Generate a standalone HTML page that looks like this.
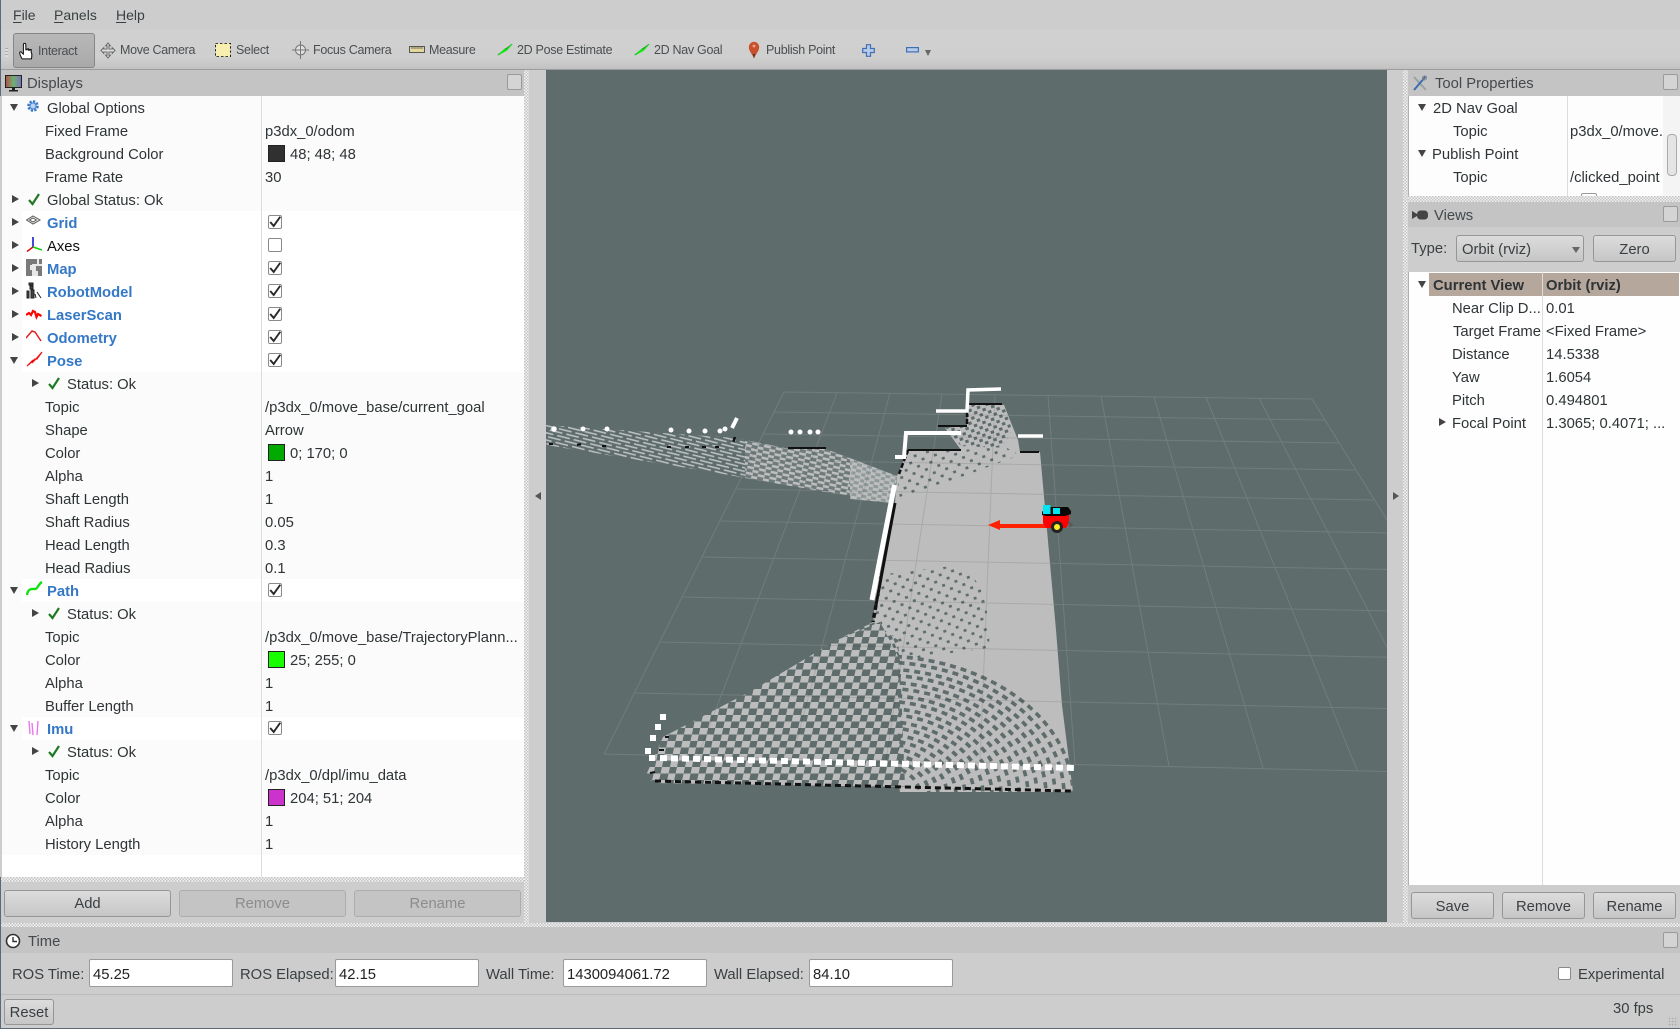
<!DOCTYPE html>
<html><head><meta charset="utf-8"><style>
html,body{margin:0;padding:0;width:1680px;height:1029px;overflow:hidden;background:#cdcdcd}
body{position:relative;font:14.8px/27px "Liberation Sans","DejaVu Sans",sans-serif;color:#2e3436}
div,span,svg{position:absolute;white-space:nowrap}
.r{left:0;width:524px;height:23px;background:#fbfbfb}
.w{position:absolute;left:22px;right:0;top:0;bottom:0;background:#fff}
.b{color:#3478c6;font-weight:bold}
.l0{left:47px}.l1{left:45px}.l2{left:67px}.v{left:265px;color:#2e3436}.vc{left:290px}
.a{width:0;height:0;border-left:7px solid #444;border-top:4.5px solid transparent;border-bottom:4.5px solid transparent;left:12px;top:7px}
.d{width:0;height:0;border-top:7px solid #444;border-left:4.5px solid transparent;border-right:4.5px solid transparent;left:10px;top:8px}
.n{left:32px}
.sw{left:268px;top:3px;width:15px;height:15px;border:1px solid #222}
.ck{left:268px;top:4px;width:12px;height:12px;border:1px solid #8a8a8a;border-radius:2px;background:#fff}
.ck svg{left:-1px;top:-3px}
.ic{left:26px;top:3px}
.chk{left:46px;top:3px}
.tb{font-size:12.5px;line-height:16px;color:#4a4f52;letter-spacing:-.3px;top:42px}
.m{font-size:14px;line-height:18px;top:6px;color:#3a3f42}
.m u{text-underline-offset:2px}
.tt{background:#c4c4c4;height:26px;color:#44494c;line-height:26px}
.fl{width:13px;height:14px;background:#d4d4d4;border:1px solid #9a9a9a;border-radius:2px}
.bt{background:linear-gradient(#dcdcdc,#c6c6c6);border:1px solid #969696;border-radius:3px;text-align:center;line-height:27px;box-sizing:border-box;color:#3a3f42}
.rb{line-height:29px}
.ds{background:#c4c4c4;border-color:#adadad;color:#8c8c8c}
.dot{background:repeating-conic-gradient(#f2f2f2 0 25%,#c4c4c4 0 50%) 0 0/3px 3px}
.inp{height:28px;background:#fff;border:1px solid #9a9a9a;border-radius:2px;box-sizing:border-box;line-height:30px;padding-left:3px;top:959px;width:144px;color:#222}
.lb{top:962px;color:#3a3f42}
</style></head><body>

<svg width="0" height="0" style="left:0;top:0"><defs>
<symbol id="okk" viewBox="0 0 16 16"><path d="M3 9 L6.5 13 L13 3" fill="none" stroke="#1f7a23" stroke-width="2.2"/></symbol>
<symbol id="tick" viewBox="0 0 16 18"><path d="M2.5 9 L6.5 13.5 L14 3" fill="none" stroke="#2a2a2a" stroke-width="2.2"/></symbol>
</defs></svg>

<!-- window edges -->
<div style="left:0;top:0;width:1px;height:1029px;background:#5a6a78"></div>
<div style="left:0;top:1028px;width:1680px;height:1px;background:#5a6a78"></div>

<!-- menu -->
<div style="left:1px;top:0;width:1679px;height:30px;background:#cdcdcd"></div>
<div class="m" style="left:13px"><u>F</u>ile</div>
<div class="m" style="left:54px"><u>P</u>anels</div>
<div class="m" style="left:116px"><u>H</u>elp</div>

<!-- toolbar -->
<div style="left:1px;top:30px;width:1679px;height:40px;background:linear-gradient(#d0d0d0 0,#cfcfcf 70%,#c2c2c2 97%,#9c9c9c 97%)"></div>
<div style="left:5px;top:48px;width:3px;height:9px;background:repeating-linear-gradient(#aaa 0 1px,#ddd 1px 3px)"></div>
<div style="left:13px;top:33px;width:80px;height:33px;background:linear-gradient(#b8b8b8,#a9a9a9);border:1px solid #868686;border-radius:3px"></div>
<svg style="left:17px;top:42px" width="18" height="19" viewBox="0 0 18 22"><path d="M6 11 V3 a1.4 1.4 0 0 1 2.8 0 V9 h1.6 V8 h1.6 v1.5 h1.5 v-.8 h1.5 V12 c1 1 .8 5 .3 7.5 H4.5 C3 17 1.5 13.5 1.8 12 c.6-1.2 2.3-.7 2.8 1 L6 14 Z" fill="#fff" stroke="#111" stroke-width="1.2"/></svg>
<div class="tb" style="left:38px;top:43px">Interact</div>

<svg style="left:100px;top:42px" width="16" height="17" viewBox="0 0 16 18" fill="none" stroke="#666"><path d="M8 1 L10.5 4 H9 V7.5 H12.5 V6 L15.5 9 L12.5 12 V10.5 H9 V14 H10.5 L8 17 L5.5 14 H7 V10.5 H3.5 V12 L.5 9 L3.5 6 V7.5 H7 V4 H5.5 Z" fill="#ddd"/></svg>
<div class="tb" style="left:120px">Move Camera</div>
<svg style="left:215px;top:43px" width="16" height="14" viewBox="0 0 16 15" preserveAspectRatio="none"><rect x=".5" y=".5" width="15" height="14" fill="#f6efb0" stroke="#222" stroke-dasharray="2.5 2"/></svg>
<div class="tb" style="left:236px">Select</div>
<svg style="left:292px;top:41px" width="17" height="18" viewBox="0 0 17 18" fill="none" stroke="#777"><path d="M8.5 0 V18 M0 9 H17"/><circle cx="8.5" cy="9" r="5" fill="#e2e2e2"/><path d="M8.5 3 V15 M3 9 H14"/></svg>
<div class="tb" style="left:313px">Focus Camera</div>
<svg style="left:409px;top:46px" width="16" height="8" viewBox="0 0 16 8"><rect x=".5" y=".5" width="15" height="6" fill="#e3d89a" stroke="#555"/><path d="M3 1v2M5 1v2M7 1v2M9 1v2M11 1v2M13 1v2" stroke="#555" stroke-width=".8"/></svg>
<div class="tb" style="left:429px">Measure</div>
<svg style="left:497px;top:43px" width="16" height="13" viewBox="0 0 17 17" preserveAspectRatio="none"><path d="M1 15.5 L16 1.5" stroke="#111" stroke-width="1"/><path d="M1 16 L9 7 L7 10.5 L11 9 Z M9 9 L16 1.5 L11.5 8 Z" fill="#12e812" stroke="#12e812" stroke-width="1"/></svg>
<div class="tb" style="left:517px">2D Pose Estimate</div>
<svg style="left:634px;top:43px" width="16" height="13" viewBox="0 0 17 17" preserveAspectRatio="none"><path d="M1 15.5 L16 1.5" stroke="#111" stroke-width="1"/><path d="M1 16 L9 7 L7 10.5 L11 9 Z M9 9 L16 1.5 L11.5 8 Z" fill="#12e812" stroke="#12e812" stroke-width="1"/></svg>
<div class="tb" style="left:654px">2D Nav Goal</div>
<svg style="left:748px;top:41px" width="12" height="18" viewBox="0 0 12 18"><path d="M6 17.5 C4.5 13 .8 10.5 .8 6 a5.2 5.2 0 0 1 10.4 0 C11.2 10.5 7.5 13 6 17.5 Z" fill="#c8502c"/><circle cx="6" cy="5" r="1.4" fill="#eba68a"/><path d="M4.7 13 H7.3 L6 17.5 Z" fill="#553322"/></svg>
<div class="tb" style="left:766px">Publish Point</div>
<svg style="left:862px;top:44px" width="13" height="13" viewBox="0 0 13 13"><path d="M4.5 .7 H8.5 V4.5 H12.3 V8.5 H8.5 V12.3 H4.5 V8.5 H.7 V4.5 H4.5 Z" fill="#b8cbe8" stroke="#3f6fb5" stroke-width="1.2"/></svg>
<svg style="left:906px;top:47px" width="13" height="6" viewBox="0 0 13 6"><rect x=".6" y=".6" width="11.8" height="4.3" fill="#b8cbe8" stroke="#3f6fb5" stroke-width="1.2"/></svg>
<div style="left:925px;top:50px;width:0;height:0;border-top:6px solid #666;border-left:3.5px solid transparent;border-right:3.5px solid transparent"></div>

<!-- Displays panel -->
<div class="tt" style="left:1px;top:70px;width:523px"></div>
<svg style="left:5px;top:75px" width="17" height="17" viewBox="0 0 17 17"><rect x=".5" y=".5" width="16" height="12" fill="url(#rb)" stroke="#222"/><defs><linearGradient id="rb"><stop offset="0" stop-color="#b0504a"/><stop offset=".5" stop-color="#70b070"/><stop offset="1" stop-color="#7a70c0"/></linearGradient></defs><path d="M7 13 h3 v2 h3 v1.5 H4 V15 h3 Z" fill="#222"/></svg>
<div style="left:27px;top:70px;line-height:28px;color:#44494c">Displays</div>
<div class="fl" style="left:507px;top:74px"></div>

<div style="left:2px;top:96px;width:522px;height:781px;background:#fbfbfb;overflow:hidden"></div>

<div style="left:0;top:0;width:524px;height:877px;overflow:hidden">
<div class="r" style="top:96px"><span class="d"></span><svg class="ic" width="16" height="16" viewBox="0 0 16 16"><circle cx="7" cy="7" r="4.5" fill="#cfe0f5" stroke="#3a78c8" stroke-width="2.6" stroke-dasharray="2.2 1.3"/><circle cx="7" cy="7" r="3" fill="#bcd3ef" stroke="#4a86d0"/></svg><span class="l0">Global Options</span></div>
<div class="r" style="top:119px"><span class="l1">Fixed Frame</span><span class="v">p3dx_0/odom</span></div>
<div class="r" style="top:142px"><span class="l1">Background Color</span><span class="sw" style="background:#303030"></span><span class="vc">48; 48; 48</span></div>
<div class="r" style="top:165px"><span class="l1">Frame Rate</span><span class="v">30</span></div>
<div class="r" style="top:188px"><span class="a"></span><svg class="ic" width="16" height="16"><use href="#okk"/></svg><span class="l0">Global Status: Ok</span></div>

<div class="r" style="top:211px"><i class="w"></i><span class="a"></span><svg class="ic" width="16" height="16" viewBox="0 0 16 16" fill="none" stroke="#555"><path d="M7 2 L14 6 L7 10 L0.5 6 Z M7 4 L10.5 6 L7 8 L3.5 6 Z"/></svg><span class="l0 b">Grid</span><span class="ck"><svg width="14" height="18"><use href="#tick"/></svg></span></div>
<div class="r" style="top:234px"><i class="w"></i><span class="a"></span><svg class="ic" style="top:2px" width="17" height="17" viewBox="0 0 17 17"><path d="M7 11 V1" stroke="#1a1ad0" stroke-width="1.6"/><path d="M7 11 L1 15.5" stroke="#e01010" stroke-width="1.6"/><path d="M7 11 L16 14" stroke="#10d010" stroke-width="1.6"/></svg><span class="l0" style="color:#111">Axes</span><span class="ck"></span></div>
<div class="r" style="top:257px"><i class="w"></i><span class="a"></span><svg class="ic" style="top:2px" width="16" height="17" viewBox="0 0 16 17"><rect width="16" height="17" fill="#e8e8e8"/><path d="M0 0h6v6H0zM6 0h5v5H6zM13 0h3v5h-3zM0 6h4v5H0zM0 11h6v6H0zM10 7h6v5h-6zM12 12h4v5h-4z" fill="#7a7a7a"/></svg><span class="l0 b">Map</span><span class="ck"><svg width="14" height="18"><use href="#tick"/></svg></span></div>
<div class="r" style="top:280px"><i class="w"></i><span class="a"></span><svg class="ic" style="top:2px" width="16" height="17" viewBox="0 0 16 17"><path d="M3 1h4v2H3zM4 4h3v3H4zM1 9h2v7H1zM5 8h3v8H5zM9 12l1 4M11 10l4 6" stroke="#222" stroke-width="1" fill="#444"/></svg><span class="l0 b">RobotModel</span><span class="ck"><svg width="14" height="18"><use href="#tick"/></svg></span></div>
<div class="r" style="top:303px"><i class="w"></i><span class="a"></span><svg class="ic" width="16" height="16" viewBox="0 0 16 16"><path d="M0 9 L3 7 L5 9 L7 5 L9 6 L10.5 11 L12 8 L15.5 10" fill="none" stroke="#f00" stroke-width="2.2"/></svg><span class="l0 b">LaserScan</span><span class="ck"><svg width="14" height="18"><use href="#tick"/></svg></span></div>
<div class="r" style="top:326px"><i class="w"></i><span class="a"></span><svg class="ic" style="top:2px" width="16" height="17" viewBox="0 0 16 17"><path d="M0 10 L6 3 L9 4 L15 13" fill="none" stroke="#e02020" stroke-width="1.5"/></svg><span class="l0 b">Odometry</span><span class="ck"><svg width="14" height="18"><use href="#tick"/></svg></span></div>
<div class="r" style="top:349px"><i class="w"></i><span class="d"></span><svg class="ic" style="top:1px" width="17" height="18" viewBox="0 0 17 18"><path d="M1 16 L7 10 L6 13 L10 9 L16 2 L11 9 L9 9 Z" fill="#f01010" stroke="#f01010" stroke-width="1.2"/></svg><span class="l0 b">Pose</span><span class="ck"><svg width="14" height="18"><use href="#tick"/></svg></span></div>
<div class="r" style="top:372px"><span class="a n"></span><svg class="chk" width="16" height="16"><use href="#okk"/></svg><span class="l2">Status: Ok</span></div>
<div class="r" style="top:395px"><span class="l1">Topic</span><span class="v">/p3dx_0/move_base/current_goal</span></div>
<div class="r" style="top:418px"><span class="l1">Shape</span><span class="v">Arrow</span></div>
<div class="r" style="top:441px"><span class="l1">Color</span><span class="sw" style="background:#00aa00"></span><span class="vc">0; 170; 0</span></div>
<div class="r" style="top:464px"><span class="l1">Alpha</span><span class="v">1</span></div>
<div class="r" style="top:487px"><span class="l1">Shaft Length</span><span class="v">1</span></div>
<div class="r" style="top:510px"><span class="l1">Shaft Radius</span><span class="v">0.05</span></div>
<div class="r" style="top:533px"><span class="l1">Head Length</span><span class="v">0.3</span></div>
<div class="r" style="top:556px"><span class="l1">Head Radius</span><span class="v">0.1</span></div>
<div class="r" style="top:579px"><i class="w"></i><span class="d"></span><svg class="ic" style="top:2px" width="17" height="16" viewBox="0 0 17 16"><path d="M1 14 C2 7 6 8 9 8 C12 8 12 3 16 1" fill="none" stroke="#10e010" stroke-width="2.4"/></svg><span class="l0 b">Path</span><span class="ck"><svg width="14" height="18"><use href="#tick"/></svg></span></div>
<div class="r" style="top:602px"><span class="a n"></span><svg class="chk" width="16" height="16"><use href="#okk"/></svg><span class="l2">Status: Ok</span></div>
<div class="r" style="top:625px"><span class="l1">Topic</span><span class="v">/p3dx_0/move_base/TrajectoryPlann...</span></div>
<div class="r" style="top:648px"><span class="l1">Color</span><span class="sw" style="background:#19ff00"></span><span class="vc">25; 255; 0</span></div>
<div class="r" style="top:671px"><span class="l1">Alpha</span><span class="v">1</span></div>
<div class="r" style="top:694px"><span class="l1">Buffer Length</span><span class="v">1</span></div>
<div class="r" style="top:717px"><i class="w"></i><span class="d"></span><svg class="ic" style="left:28px;top:3px" width="12" height="16" viewBox="0 0 12 16" fill="none" stroke="#e878e8" stroke-width="1.4"><path d="M1 1 L2 14 M4 3 L5 15 M10 1 L9 15"/></svg><span class="l0 b">Imu</span><span class="ck"><svg width="14" height="18"><use href="#tick"/></svg></span></div>
<div class="r" style="top:740px"><span class="a n"></span><svg class="chk" width="16" height="16"><use href="#okk"/></svg><span class="l2">Status: Ok</span></div>
<div class="r" style="top:763px"><span class="l1">Topic</span><span class="v">/p3dx_0/dpl/imu_data</span></div>
<div class="r" style="top:786px"><span class="l1">Color</span><span class="sw" style="background:#cc33cc"></span><span class="vc">204; 51; 204</span></div>
<div class="r" style="top:809px"><span class="l1">Alpha</span><span class="v">1</span></div>
<div class="r" style="top:832px"><span class="l1">History Length</span><span class="v">1</span></div>
<div class="r" style="top:855px;height:22px;background:#fff"></div>
<div style="left:261px;top:96px;width:1px;height:781px;background:#dcdcdc"></div>
<div style="left:0;top:96px;width:2px;height:781px;background:#cdcdcd"></div>
</div>

<div class="dot" style="left:1px;top:877px;width:528px;height:5px"></div>
<div class="dot" style="left:524px;top:70px;width:5px;height:853px"></div>
<div class="bt" style="left:4px;top:890px;width:167px;height:27px">Add</div>
<div class="bt ds" style="left:179px;top:890px;width:167px;height:27px">Remove</div>
<div class="bt ds" style="left:354px;top:890px;width:167px;height:27px">Rename</div>

<!-- collapse arrows -->
<div style="left:535px;top:492px;width:0;height:0;border-right:6px solid #555;border-top:4px solid transparent;border-bottom:4px solid transparent"></div>
<div style="left:1393px;top:492px;width:0;height:0;border-left:6px solid #555;border-top:4px solid transparent;border-bottom:4px solid transparent"></div>

<!-- 3D viewport -->
<svg style="left:546px;top:70px" width="841" height="852" viewBox="546 70 841 852">
<defs>
<pattern id="p1" patternUnits="userSpaceOnUse" width="15" height="13" patternTransform="skewX(-12)"><rect width="15" height="13" fill="#5e6c6c"/><rect width="8" height="6.5" fill="#bdbdbd"/><rect x="8" y="6.5" width="8" height="6.5" fill="#bdbdbd"/></pattern>
<pattern id="p2" patternUnits="userSpaceOnUse" width="11" height="9" patternTransform="rotate(-22)"><rect width="11" height="9" fill="#5e6c6c"/><rect width="6" height="4.5" fill="#bdbdbd"/><rect x="5.5" y="4.5" width="6" height="4.5" fill="#bdbdbd"/></pattern>
<pattern id="p3" patternUnits="userSpaceOnUse" width="9" height="8" patternTransform="rotate(-20)"><rect width="9" height="8" fill="#bdbdbd"/><rect width="3.4" height="3" fill="#5e6c6c"/><rect x="4.5" y="4" width="3.4" height="3" fill="#5e6c6c"/></pattern>
<pattern id="p6" patternUnits="userSpaceOnUse" width="13" height="11" patternTransform="rotate(-18)"><rect width="13" height="11" fill="#bdbdbd"/><rect width="3" height="2.6" fill="#5e6c6c"/><rect x="6.5" y="5.5" width="3" height="2.6" fill="#5e6c6c"/></pattern>
<pattern id="p4" patternUnits="userSpaceOnUse" width="17" height="7" patternTransform="rotate(14)"><rect width="13" height="1.6" fill="#b9bebe"/><rect x="8.5" y="3.5" width="13" height="1.6" fill="#b9bebe"/><rect x="-8.5" y="3.5" width="13" height="1.6" fill="#b9bebe"/></pattern>
<pattern id="p5" patternUnits="userSpaceOnUse" width="10" height="6" patternTransform="rotate(11)"><rect width="10" height="6" fill="#8f9a9a"/><rect width="6" height="3" fill="#bdbdbd"/><rect x="5" y="3" width="6" height="3" fill="#bdbdbd"/></pattern>
<pattern id="p7" patternUnits="userSpaceOnUse" width="12" height="6" patternTransform="rotate(12)"><rect width="12" height="6" fill="#6e7b7b"/><rect width="7" height="2.6" fill="#bdbdbd"/><rect x="6" y="3" width="7" height="2.6" fill="#bdbdbd"/></pattern>
<clipPath id="c1"><polygon points="898,650 975,645 1056,645 1062,705 1073,792 898,792"/></clipPath>
<path id="gr" d="M784 392L1312 399M774 412L1325 420M763 434L1339 443M750 460L1356 470M736 489L1374 500M720 521L1395 533M702 557L1418 570M682 597L1444 612M660 642L1473 659M634 693L1506 711M604 754L1545 775M784 392L604 754M837 393L698 756M890 393L792 758M942 394L886 760M995 395L980 762M1048 396L1075 764M1101 396L1169 766M1154 397L1263 768M1206 397L1357 770M1259 398L1451 772M1312 399L1545 775" fill="none"/>
</defs>
<rect x="546" y="70" width="841" height="852" fill="#5e6c6c"/>
<use href="#gr" stroke="#7f8b8b" stroke-width="1"/>
<!-- left wedge -->
<polygon points="546,425 736,438 790,449 826,449 897,476 893,503 826,492 700,470 546,445" fill="url(#p4)"/>
<polygon points="745,441 790,449 826,449 860,462 860,497 826,492 745,478" fill="url(#p7)"/>
<polygon points="850,458 897,476 893,503 850,499" fill="url(#p5)"/>
<!-- corridor solid -->
<polygon points="895,503 897,476 908,450 961,450 945,428 967,426 969,405 1004,405 1018,440 1020,452 1040,452 1056,630 1062,705 1073,792 900,792 880,640 873,620" fill="#bdbdbd"/>
<!-- upper zone dots -->
<polygon points="969,405 1004,405 1012,430 1002,448 961,446 945,428 967,426" fill="url(#p3)"/>
<polygon points="897,476 908,450 961,450 1005,447 1020,455 980,470 900,500" fill="url(#p6)"/>
<!-- bottom wedge dots & checker -->
<polygon points="878,575 960,565 985,590 990,648 898,660 873,622" fill="url(#p6)"/>
<polygon points="873,622 837,640 790,668 900,668 898,640" fill="url(#p2)"/>
<polygon points="880,622 837,640 753,690 663,737 647,773 653,783 905,787 900,660" fill="url(#p1)"/>
<!-- arcs -->
<g clip-path="url(#c1)" fill="none" stroke="#5e6c6c" stroke-width="3.6" stroke-dasharray="6 5">
<ellipse cx="880" cy="795" rx="40" ry="30"/><ellipse cx="880" cy="795" rx="49" ry="36"/><ellipse cx="880" cy="795" rx="58" ry="42"/><ellipse cx="880" cy="795" rx="67" ry="48"/><ellipse cx="880" cy="795" rx="76" ry="55"/><ellipse cx="880" cy="795" rx="85" ry="61"/><ellipse cx="880" cy="795" rx="94" ry="68"/><ellipse cx="880" cy="795" rx="103" ry="74"/><ellipse cx="880" cy="795" rx="112" ry="81"/><ellipse cx="880" cy="795" rx="121" ry="87"/><ellipse cx="880" cy="795" rx="130" ry="94"/><ellipse cx="880" cy="795" rx="139" ry="100"/><ellipse cx="880" cy="795" rx="148" ry="107"/><ellipse cx="880" cy="795" rx="157" ry="113"/><ellipse cx="880" cy="795" rx="166" ry="120"/><ellipse cx="880" cy="795" rx="175" ry="126"/><ellipse cx="880" cy="795" rx="184" ry="133"/><ellipse cx="880" cy="795" rx="193" ry="139"/>
</g>
<use href="#gr" stroke="#000" stroke-opacity=".1" stroke-width="1"/>
<!-- black walls -->
<g fill="none" stroke="#111">
<path d="M895 503L876 605" stroke-width="3"/>
<path d="M876 605L873 622" stroke-width="3.5" stroke-dasharray="5 3"/>
<path d="M908 450L961 450M938 426L967 426M969 404L1002 404M1020 452L1039 452M788 448L826 448" stroke-width="2"/>
<path d="M967 405L967 425M908 450L899 474M735 437L733 443" stroke-width="2.5" stroke-dasharray="5 2"/>
<path d="M655 781L1072 791" stroke-width="3" stroke-dasharray="6 4"/>
<path d="M665 737L669 737M659 750L664 750M650 773L655 772M549 444L553 444M577 445L581 444M602 446L606 446M667 447L671 447M685 447L689 447M702 447L706 447M715 447L719 447" stroke-width="2"/>
</g>
<!-- white walls -->
<g fill="none" stroke="#fff">
<path d="M894.5 485L872 600" stroke-width="5"/>
<path d="M895 457L904 457L906 433L961 433" stroke-width="4"/>
<path d="M936 411L967 411L968 390L1001 389M1018 436L1043 436" stroke-width="3.5"/>
<path d="M732 428L737 418" stroke-width="4"/>
<path d="M660 758L1076 768" stroke-width="6" stroke-dasharray="7 4"/>
</g>
<g fill="#fff">
<circle cx="554" cy="429" r="2.8"/><circle cx="583" cy="429" r="2.5"/><circle cx="607" cy="429" r="2.5"/><circle cx="671" cy="430" r="2.5"/><circle cx="689" cy="431" r="2.5"/><circle cx="705" cy="431" r="2.5"/><circle cx="720" cy="431" r="2.5"/><circle cx="725" cy="429" r="2.5"/><circle cx="791" cy="432" r="2.5"/><circle cx="800" cy="432" r="2.5"/><circle cx="810" cy="432" r="2.5"/><circle cx="818" cy="432" r="2.5"/>
<rect x="660" y="714" width="6" height="6"/><rect x="655" y="724" width="6" height="6"/><rect x="650" y="735" width="6" height="6"/><rect x="645" y="748" width="6" height="6"/><rect x="649" y="755" width="6" height="6"/>
</g>
<!-- arrow -->
<path d="M988 525 L1000 520 L1000 524 L1047 524 L1047 528 L1000 528 L1000 530 Z" fill="#ff2200"/>
<!-- robot -->
<path d="M1043 515 H1069 V523 L1066 528 H1046 L1043 523 Z" fill="#f00"/>
<path d="M1042 512 L1046 507 H1068 L1071 511 V514 L1065 516 H1046 L1042 515 Z" fill="#080808"/>
<rect x="1043" y="505" width="7.5" height="9" fill="#00e6f0"/><rect x="1053" y="508" width="7" height="6" fill="#00e6f0"/>
<circle cx="1057" cy="527" r="6" fill="#222"/><circle cx="1057" cy="527" r="3" fill="#ffee22"/>
<path d="M1068 522 L1072 525 L1069 527" fill="none" stroke="#555" stroke-width="1.5"/>
</svg>

<!-- right column -->
<div class="dot" style="left:1403px;top:70px;width:5px;height:853px"></div>
<div class="tt" style="left:1408px;top:70px;width:272px"></div>
<svg style="left:1412px;top:75px" width="16" height="17" viewBox="0 0 16 17" fill="none"><path d="M2 2 L14 15" stroke="#9aa0a6" stroke-width="2"/><path d="M14 1 L2 15" stroke="#3a6cb0" stroke-width="2"/><circle cx="12.5" cy="3" r="2" stroke="#888"/></svg>
<div style="left:1435px;top:70px;line-height:28px;color:#44494c">Tool Properties</div>
<div class="fl" style="left:1663px;top:74px"></div>
<div style="left:1408px;top:96px;width:272px;height:100px;background:#fdfdfd;overflow:hidden;border-left:1px solid #b0b0b0;box-sizing:border-box">
<div style="left:24px;top:0">2D Nav Goal</div>
<div style="left:44px;top:23px">Topic</div><div style="left:161px;top:23px;width:93px;overflow:hidden">p3dx_0/move.</div>
<div style="left:23px;top:46px">Publish Point</div>
<div style="left:44px;top:69px">Topic</div><div style="left:161px;top:69px">/clicked_point</div>
<div style="left:9px;top:8px;width:0;height:0;border-top:7px solid #444;border-left:4.5px solid transparent;border-right:4.5px solid transparent"></div>
<div style="left:9px;top:54px;width:0;height:0;border-top:7px solid #444;border-left:4.5px solid transparent;border-right:4.5px solid transparent"></div>
<div style="left:158px;top:0;width:1px;height:100px;background:#dcdcdc"></div>
<div style="left:172px;top:97px;width:14px;height:8px;border:1px solid #999;border-radius:2px;background:#fff"></div>
<div style="left:254px;top:0;width:18px;height:100px;background:#f4f4f4"></div>
<div style="left:258px;top:38px;width:8px;height:40px;border:1px solid #aaa;border-radius:4px;background:#e4e4e4"></div>
</div>
<div class="dot" style="left:1408px;top:196px;width:272px;height:6px"></div>

<div class="tt" style="left:1408px;top:202px;width:272px;height:25px"></div>
<svg style="left:1412px;top:209px" width="16" height="12" viewBox="0 0 16 12"><path d="M0 2 L5 5 V7 L0 10 Z" fill="#444"/><rect x="5" y="1.5" width="11" height="9" rx="3.5" fill="#444"/></svg>
<div style="left:1434px;top:202px;line-height:29px;color:#44494c">Views</div>
<div class="fl" style="left:1663px;top:206px"></div>
<div style="left:1411px;top:236px;color:#3a3f42">Type:</div>
<div class="bt rb" style="left:1456px;top:235px;width:128px;height:27px;text-align:left;padding-left:5px">Orbit (rviz)</div>
<div style="left:1572px;top:247px;width:0;height:0;border-top:6px solid #666;border-left:4px solid transparent;border-right:4px solid transparent"></div>
<div class="bt rb" style="left:1593px;top:235px;width:83px;height:27px">Zero</div>

<div style="left:1408px;top:272px;width:272px;height:613px;background:#fefefe;border-left:1px solid #b0b0b0;box-sizing:border-box;overflow:hidden">
<div style="left:20px;top:1px;width:250px;height:23px;background:#b6a79d"></div>
<div style="left:9px;top:9px;width:0;height:0;border-top:7px solid #444;border-left:4.5px solid transparent;border-right:4.5px solid transparent"></div>
<div style="left:24px;top:1px;font-weight:bold">Current View</div>
<div style="left:137px;top:1px;font-weight:bold">Orbit (rviz)</div>
<div style="left:43px;top:24px">Near Clip D...</div><div style="left:137px;top:24px">0.01</div>
<div style="left:44px;top:47px">Target Frame</div><div style="left:137px;top:47px">&lt;Fixed Frame&gt;</div>
<div style="left:43px;top:70px">Distance</div><div style="left:137px;top:70px">14.5338</div>
<div style="left:43px;top:93px">Yaw</div><div style="left:137px;top:93px">1.6054</div>
<div style="left:43px;top:116px">Pitch</div><div style="left:137px;top:116px">0.494801</div>
<div style="left:43px;top:139px">Focal Point</div><div style="left:137px;top:139px">1.3065; 0.4071; ...</div>
<div style="left:30px;top:146px;width:0;height:0;border-left:7px solid #444;border-top:4.5px solid transparent;border-bottom:4.5px solid transparent"></div>
<div style="left:133px;top:0;width:1px;height:613px;background:#dcdcdc"></div>
</div>

<div class="bt rb" style="left:1411px;top:892px;width:83px;height:27px">Save</div>
<div class="bt rb" style="left:1502px;top:892px;width:83px;height:27px">Remove</div>
<div class="bt rb" style="left:1593px;top:892px;width:83px;height:27px">Rename</div>

<!-- time panel -->
<div class="dot" style="left:1px;top:923px;width:1679px;height:4px"></div>
<div class="tt" style="left:1px;top:927px;width:1679px;height:26px"></div>
<svg style="left:5px;top:933px" width="16" height="16" viewBox="0 0 16 16" fill="none"><circle cx="8" cy="8" r="6.5" fill="#fff" stroke="#333" stroke-width="1.6"/><path d="M8 4 V8.5 H12" stroke="#333" stroke-width="1.4"/></svg>
<div style="left:28px;top:929px;color:#44494c">Time</div>
<div class="fl" style="left:1663px;top:932px"></div>
<div class="lb" style="left:12px">ROS Time:</div>
<div class="inp" style="left:89px">45.25</div>
<div class="lb" style="left:240px">ROS Elapsed:</div>
<div class="inp" style="left:335px">42.15</div>
<div class="lb" style="left:486px">Wall Time:</div>
<div class="inp" style="left:563px">1430094061.72</div>
<div class="lb" style="left:714px">Wall Elapsed:</div>
<div class="inp" style="left:809px">84.10</div>
<div style="left:1558px;top:967px;width:11px;height:11px;background:#fff;border:1px solid #8a8a8a;border-radius:2px"></div>
<div class="lb" style="left:1578px">Experimental</div>
<div style="left:1px;top:994px;width:1679px;height:1px;background:#bcbcbc"></div>
<div class="bt" style="left:4px;top:999px;width:50px;height:26px;line-height:27px">Reset</div>
<div style="left:1613px;top:996px;color:#3a3f42">30 fps</div>
<div style="left:1668px;top:1017px;width:10px;height:10px;background:radial-gradient(#aaa 35%,transparent 40%) 0 0/3px 3px"></div>
</body></html>
